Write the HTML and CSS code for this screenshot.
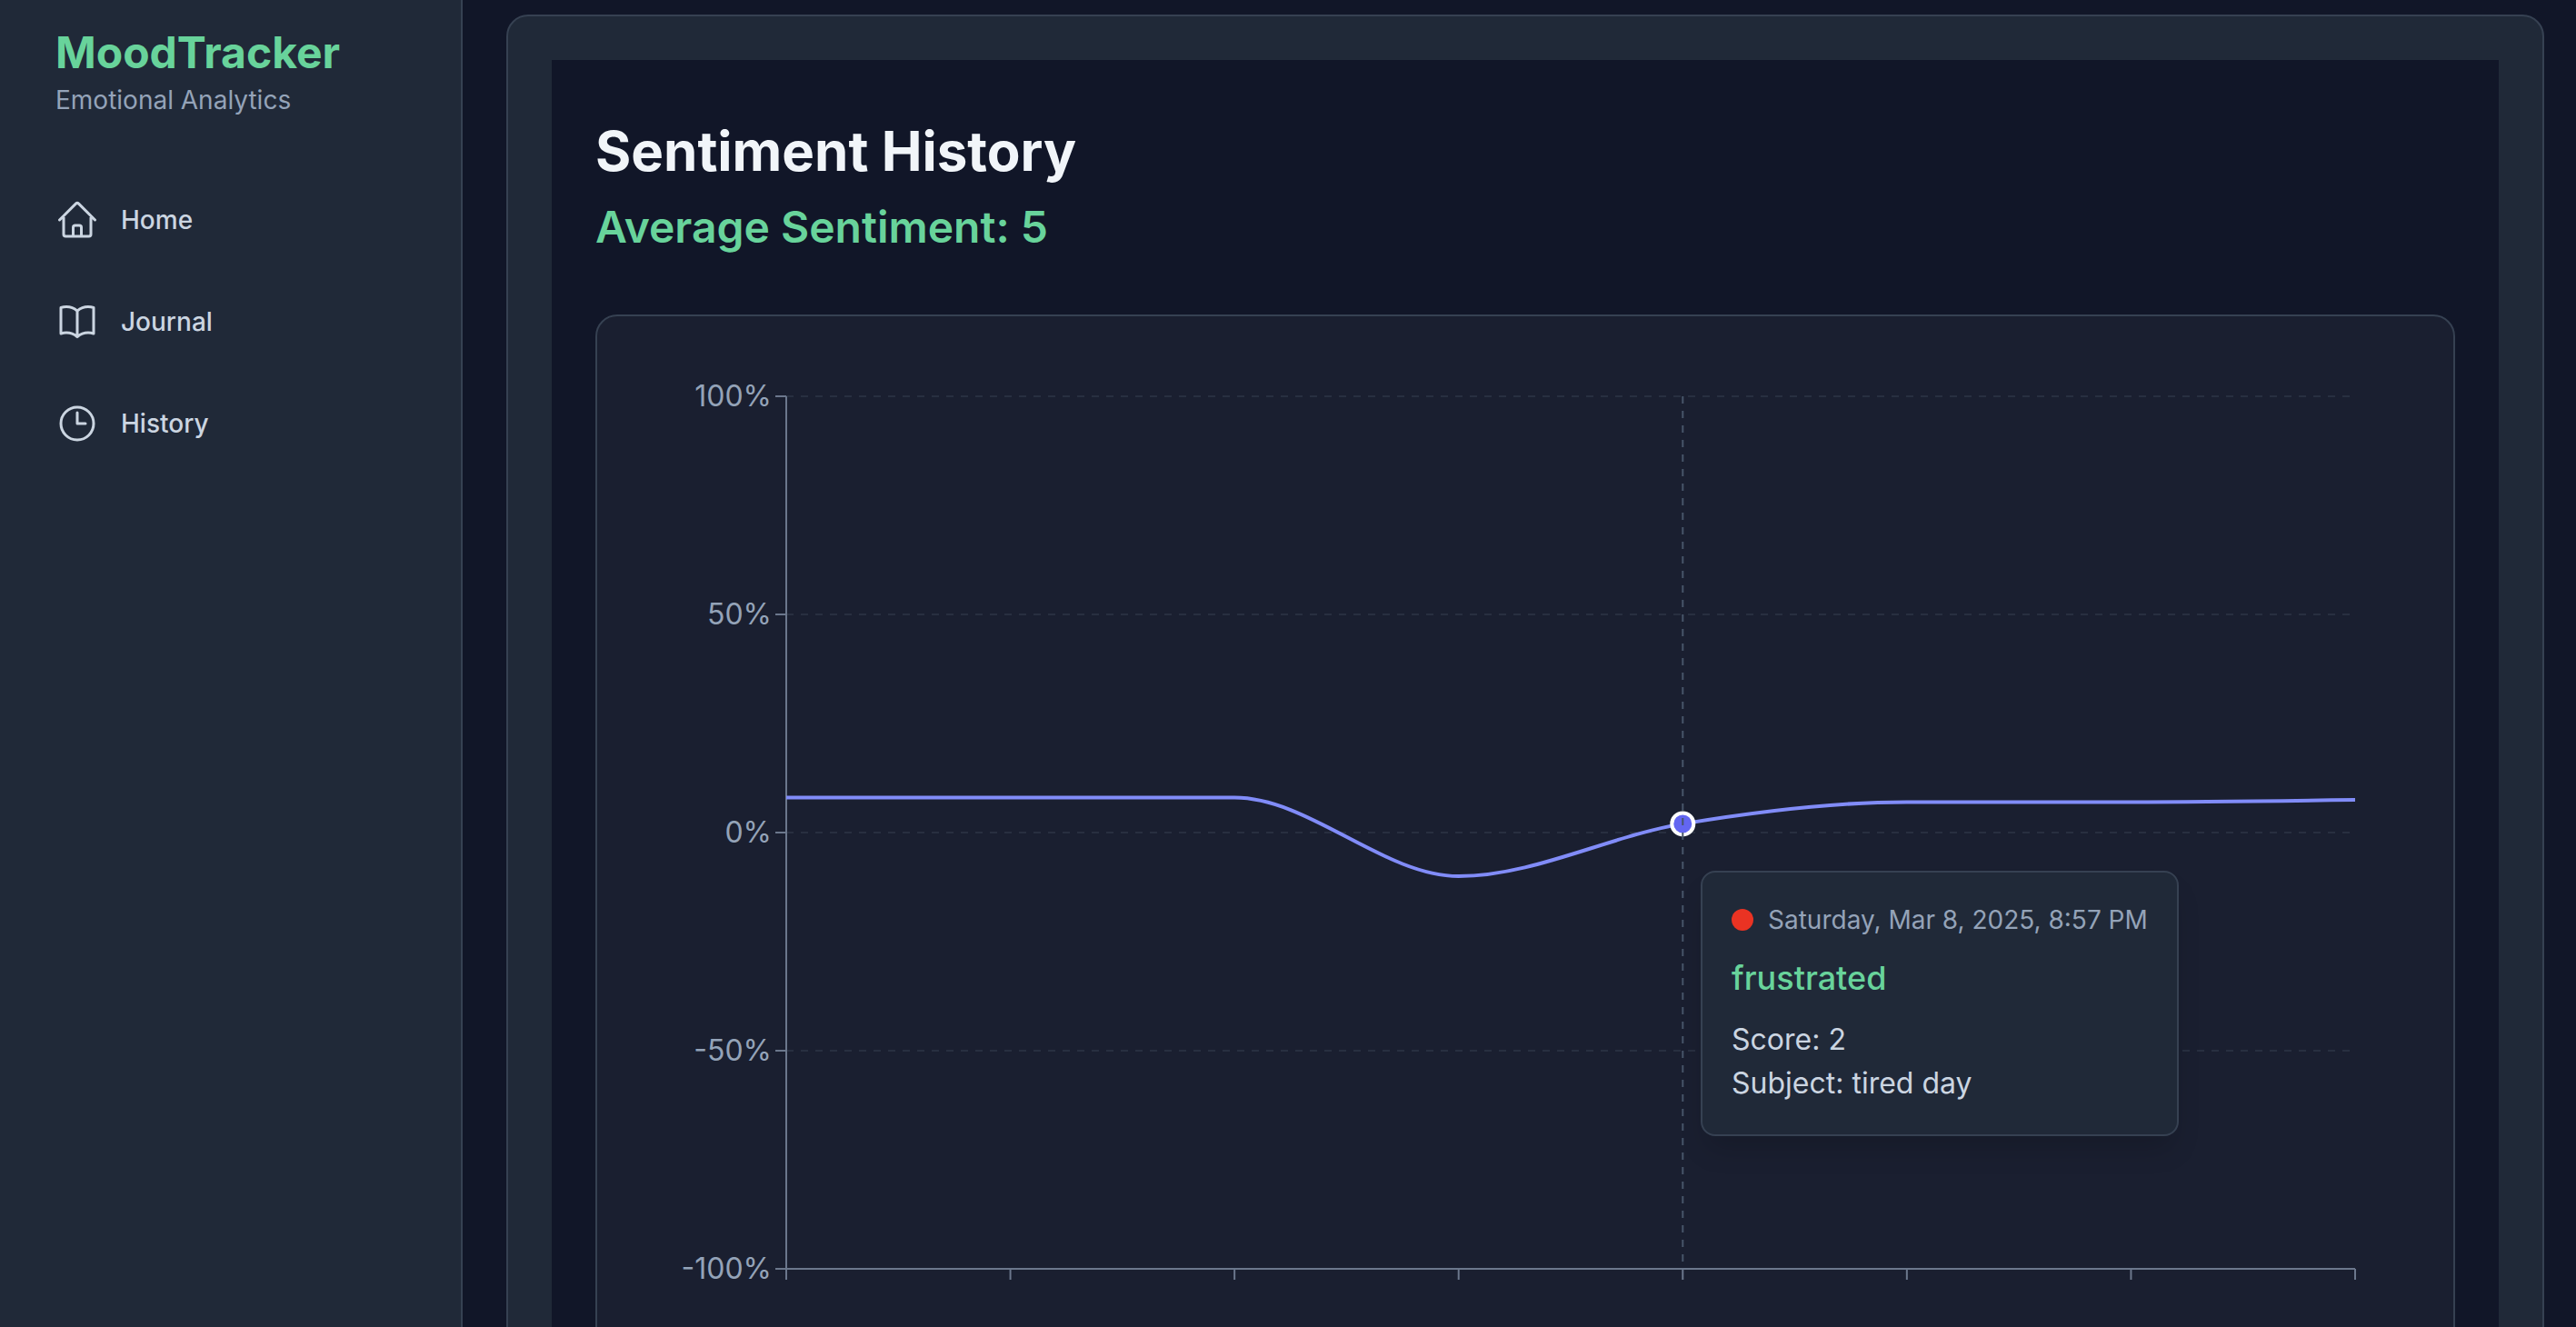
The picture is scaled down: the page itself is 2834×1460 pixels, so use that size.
FILE: index.html
```html
<!DOCTYPE html>
<html lang="en">
<head>
    <meta charset="UTF-8">
    <meta name="viewport" content="width=device-width, initial-scale=1.0">
    <title>MoodTracker - Sentiment History</title>
    <link rel="stylesheet" href="styles.css">
</head>
<body>
    <aside class="sidebar">
        <div class="brand">
            <div class="brand-name">MoodTracker</div>
            <p class="brand-tagline">Emotional Analytics</p>
        </div>
        <nav class="nav">
            <a class="nav-link" href="#home">
                <svg class="nav-icon" viewBox="0 0 24 24" aria-hidden="true">
                    <path d="M2.25 12l8.954-8.955c.44-.439 1.152-.439 1.591 0L21.75 12M4.5 9.75v10.125c0 .621.504 1.125 1.125 1.125H9.75v-4.875c0-.621.504-1.125 1.125-1.125h2.25c.621 0 1.125.504 1.125 1.125V21h4.125c.621 0 1.125-.504 1.125-1.125V9.75M8.25 21h8.25"/>
                </svg>
                <span>Home</span>
            </a>
            <a class="nav-link" href="#journal">
                <svg class="nav-icon" viewBox="0 0 24 24" aria-hidden="true">
                    <path d="M12 6.042A8.967 8.967 0 006 3.75c-1.052 0-2.062.18-3 .512v14.25A8.987 8.987 0 016 18c2.305 0 4.408.867 6 2.292m0-14.25a8.966 8.966 0 016-2.292c1.052 0 2.062.18 3 .512v14.25A8.987 8.987 0 0018 18a8.967 8.967 0 00-6 2.292m0-14.25v14.25"/>
                </svg>
                <span>Journal</span>
            </a>
            <a class="nav-link" href="#history">
                <svg class="nav-icon" viewBox="0 0 24 24" aria-hidden="true">
                    <path d="M12 6v6h4.5m4.5 0a9 9 0 11-18 0 9 9 0 0118 0z"/>
                </svg>
                <span>History</span>
            </a>
        </nav>
    </aside>

    <main class="main">
        <div class="panel">
            <section class="history">
                <h1>Sentiment History</h1>
                <h2>Average Sentiment: 5</h2>
                <div class="chart-card">
                    <div class="chart" id="chart">
                        <svg id="plot" role="img" aria-label="Sentiment over time"></svg>
                        <div class="tooltip" id="tooltip">
                            <div class="tooltip-date">
                                <span class="dot"></span>
                                <span>Saturday, Mar 8, 2025, 8:57 PM</span>
                            </div>
                            <p class="tooltip-mood">frustrated</p>
                            <p class="tooltip-row">Score: 2</p>
                            <p class="tooltip-row">Subject: tired day</p>
                        </div>
                    </div>
                </div>
            </section>
        </div>
    </main>

    <script src="chart.js"></script>
</body>
</html>
```
FILE: styles.css
```css
* {
    box-sizing: border-box;
    margin: 0;
    padding: 0;
}

body {
    display: flex;
    height: 100vh;
    overflow: hidden;
    font-family: Inter, sans-serif;
    background: #111628;
    color: #cbd5e1;
}

/* Sidebar */
.sidebar {
    flex: 0 0 509px;
    padding: 26px 61px;
    background: #202938;
    border-right: 2px solid #364152;
}

.brand {
    margin-bottom: 64px;
}

.brand-name {
    font-size: 48px;
    line-height: 64px;
    font-weight: 700;
    color: #68d39b;
}

.brand-tagline {
    font-size: 28px;
    line-height: 40px;
    color: #94a3b8;
}

.nav {
    display: flex;
    flex-direction: column;
    gap: 16px;
}

.nav-link {
    display: flex;
    align-items: center;
    gap: 24px;
    padding: 24px 0;
    font-size: 28px;
    line-height: 40px;
    font-weight: 500;
    color: #cbd5e1;
    text-decoration: none;
}

.nav-icon {
    width: 48px;
    height: 48px;
    fill: none;
    stroke: currentColor;
    stroke-width: 1.5;
    stroke-linecap: round;
    stroke-linejoin: round;
}

/* Content */
.main {
    flex: 1;
    min-width: 0;
    padding: 16px 35px 48px 48px;
}

.panel {
    padding: 48px;
    background: #202938;
    border: 2px solid #364152;
    border-radius: 24px;
}

.history {
    padding: 64px 48px 48px;
    background: #111628;
}

h1 {
    margin-bottom: 16px;
    font-size: 60px;
    line-height: 72px;
    font-weight: 700;
    color: #f1f5f9;
}

h2 {
    margin-bottom: 64px;
    font-size: 48px;
    line-height: 64px;
    font-weight: 600;
    color: #68d39b;
}

.chart-card {
    padding: 48px;
    background: #1a1f30;
    border: 2px solid #364152;
    border-radius: 24px;
}

/* Chart */
.chart {
    position: relative;
    height: 1200px;
}

.chart svg {
    display: block;
    width: 100%;
    height: 100%;
}

.grid {
    stroke: #282f40;
    stroke-width: 2;
    stroke-dasharray: 8 8;
}

.axis {
    stroke: #6b778c;
    stroke-width: 2;
}

.axis-label {
    font-size: 32px;
    fill: #94a3b8;
    text-anchor: end;
}

.line {
    fill: none;
    stroke: #818cf8;
    stroke-width: 4;
}

.point {
    fill: #6366f1;
    stroke: #fff;
    stroke-width: 4;
}

.cursor {
    stroke: #475569;
    stroke-width: 2;
    stroke-dasharray: 8 8;
}

.tooltip {
    position: absolute;
    padding: 32px;
    background: #202938;
    border: 2px solid #364152;
    border-radius: 16px;
    box-shadow: 0 20px 30px -6px rgba(0, 0, 0, 0.15);
    white-space: nowrap;
}

.tooltip-date {
    display: flex;
    align-items: center;
    gap: 16px;
    font-size: 28px;
    line-height: 40px;
    color: #94a3b8;
}

.dot {
    width: 24px;
    height: 24px;
    border-radius: 50%;
    background: #ea3323;
}

.tooltip-mood {
    margin: 16px 0;
    font-size: 36px;
    line-height: 56px;
    font-weight: 500;
    color: #68d39b;
}

.tooltip-row {
    font-size: 32px;
    line-height: 48px;
}
```
FILE: chart.js
```js
const scores = [8, 8, 8, -10, 2, 7, 7, 7.5];
const active = 4;
const margin = { top: 40, right: 60, left: 160 };
const plotHeight = 960;
const tickSize = 12;

const chart = document.getElementById('chart');
const plot = document.getElementById('plot');
const tooltip = document.getElementById('tooltip');

function add(name, attrs, text) {
    const el = document.createElementNS('http://www.w3.org/2000/svg', name);
    for (const key in attrs) {
        el.setAttribute(key, attrs[key]);
    }
    if (text) {
        el.textContent = text;
    }
    plot.appendChild(el);
}

function addLine(cls, x1, y1, x2, y2) {
    add('line', { class: cls, x1, y1, x2, y2 });
}

// monotone cubic curve through evenly spaced points
function curve(points, step) {
    const slopes = points.slice(1).map((p, i) => p.y - points[i].y);
    const last = points.length - 1;
    const tangents = points.map((p, i) => {
        if (i === 0 || i === last) return 0;
        const a = slopes[i - 1];
        const b = slopes[i];
        return (Math.sign(a) + Math.sign(b)) * Math.min(Math.abs(a), Math.abs(b), Math.abs(a + b) / 4);
    });
    tangents[0] = (3 * slopes[0] - tangents[1]) / 2;
    tangents[last] = (3 * slopes[last - 1] - tangents[last - 1]) / 2;

    let d = `M${points[0].x},${points[0].y}`;
    for (let i = 1; i <= last; i++) {
        const p = points[i - 1];
        const q = points[i];
        d += `C${p.x + step / 3},${p.y + tangents[i - 1] / 3} ${q.x - step / 3},${q.y - tangents[i] / 3} ${q.x},${q.y}`;
    }
    return d;
}

function draw() {
    plot.innerHTML = '';
    const left = margin.left;
    const right = chart.clientWidth - margin.right;
    const bottom = margin.top + plotHeight;
    const step = (right - left) / (scores.length - 1);
    const toY = value => margin.top + (100 - value) / 200 * plotHeight;
    const points = scores.map((score, i) => ({ x: left + i * step, y: toY(score) }));

    [100, 50, 0, -50, -100].forEach(value => {
        const y = toY(value);
        addLine('grid', left, y, right, y);
        addLine('axis', left - tickSize, y, left, y);
        add('text', { class: 'axis-label', x: left - 16, y: y, dy: '0.355em' }, value + '%');
    });
    addLine('axis', left, margin.top, left, bottom);
    addLine('axis', left, bottom, right, bottom);
    points.forEach(p => addLine('axis', p.x, bottom, p.x, bottom + tickSize));

    add('path', { class: 'line', d: curve(points, step) });

    const p = points[active];
    add('circle', { class: 'point', cx: p.x, cy: p.y, r: 12 });
    addLine('cursor', p.x, margin.top, p.x, bottom);

    tooltip.style.left = Math.round(p.x + 20) + 'px';
    tooltip.style.top = Math.round(p.y + 52) + 'px';
}

draw();
window.addEventListener('resize', draw);
```
